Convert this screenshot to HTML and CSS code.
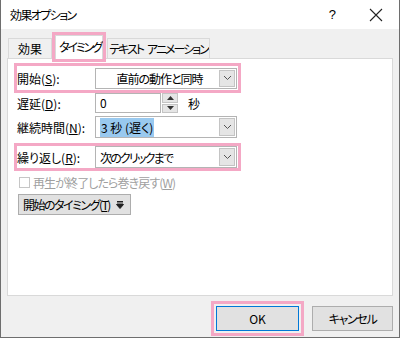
FILE: index.html
```html
<!DOCTYPE html>
<html lang="ja">
<head>
    <meta charset="UTF-8">
    <title>効果オプション</title>
    <link rel="stylesheet" href="styles.css">
</head>
<body>

<div class="window">
    <div class="titlebar">
        <span class="title">効果オプション</span>
        <span class="help">?</span>
        <svg class="close" width="14" height="14" viewBox="0 0 14 14">
            <path d="M1 1 L13 13 M13 1 L1 13" stroke="#222" stroke-width="1.1"/>
        </svg>
    </div>

    <div class="content">
        <div class="tabs">
            <div class="tab tab-effect">効果</div>
            <div class="tab tab-timing active marked">タイミング</div>
            <div class="tab tab-text">テキスト<span class="gap"></span>アニメーション</div>
        </div>

        <div class="panel">
            <div class="row row-start marked">
                <label class="label">開始(<u>S</u>):</label>
                <div class="select center">
                    <span class="value">直前の動作と同時</span>
                    <span class="drop"><svg width="9" height="6" viewBox="0 0 9 6"><path d="M1 1 L4.5 4.5 L8 1" fill="none" stroke="#555" stroke-width="1"/></svg></span>
                </div>
            </div>

            <div class="row row-delay">
                <label class="label">遅延(<u>D</u>):</label>
                <div class="input">0</div>
                <div class="spin">
                    <span class="spin-btn"><svg width="7" height="4" viewBox="0 0 7 4"><path d="M0 4 L3.5 0 L7 4 Z" fill="#333"/></svg></span>
                    <span class="spin-btn"><svg width="7" height="4" viewBox="0 0 7 4"><path d="M0 0 L3.5 4 L7 0 Z" fill="#333"/></svg></span>
                </div>
                <span class="unit">秒</span>
            </div>

            <div class="row row-length">
                <label class="label">継続時間(<u>N</u>):</label>
                <div class="select">
                    <span class="value"><span class="selected">3 秒 (遅く)</span></span>
                    <span class="drop"><svg width="9" height="6" viewBox="0 0 9 6"><path d="M1 1 L4.5 4.5 L8 1" fill="none" stroke="#555" stroke-width="1"/></svg></span>
                </div>
            </div>

            <div class="row row-repeat marked">
                <label class="label">繰り返し(<u>R</u>):</label>
                <div class="select">
                    <span class="value kana">次のクリックまで</span>
                    <span class="drop"><svg width="9" height="6" viewBox="0 0 9 6"><path d="M1 1 L4.5 4.5 L8 1" fill="none" stroke="#555" stroke-width="1"/></svg></span>
                </div>
            </div>

            <div class="check-row">
                <span class="checkbox"></span>
                <span class="check-text">再生が終了したら巻き戻す(<u>W</u>)</span>
            </div>

            <button class="trigger">
                <span class="trigger-text">開始のタイミング(<u>T</u>)</span>
                <svg width="8" height="8" viewBox="0 0 8 8"><path d="M1 0.5 H7 M1 2 H7 M0.5 3.5 L4 7.5 L7.5 3.5 Z" stroke="#222" stroke-width="1" fill="#222"/></svg>
            </button>
        </div>

        <div class="footer">
            <button class="btn ok marked">OK</button>
            <button class="btn kana">キャンセル</button>
        </div>
    </div>
</div>

</body>
</html>
```

FILE: styles.css
```css
* {
    box-sizing: border-box;
}
body {
    margin: 0;
    padding: 0;
    font-family: "Noto Sans CJK JP", "Noto Sans", sans-serif;
    font-size: 12px;
    font-feature-settings: "palt";
    color: #000;
    background: #fff;
}
u {
    text-decoration: underline;
    text-underline-offset: 1px;
}
.window {
    width: 400px;
    height: 338px;
    display: flex;
    flex-direction: column;
    border: 1px solid #6e6e6e;
    border-top: none;
    background: #f0f0f0;
}
.titlebar {
    height: 29px;
    background: #fff;
    display: flex;
    align-items: center;
    padding-left: 9px;
    flex-shrink: 0;
}
.title {
    font-size: 12px;
    letter-spacing: -1.6px;
    flex: 1;
}
.help {
    font-family: "Liberation Sans", sans-serif;
    font-size: 13px;
    margin-right: 33px;
}
.close {
    margin-right: 16px;
}
.content {
    flex: 1;
    padding: 0 6px;
    display: flex;
    flex-direction: column;
}
.tabs {
    display: flex;
    align-items: flex-end;
    height: 29px;
    padding-left: 1px;
}
.tab {
    height: 20px;
    line-height: 19px;
    border: 1px solid #d9d9d9;
    border-bottom: none;
    background: #f0f0f0;
    text-align: center;
    white-space: nowrap;
}
.tab-effect {
    width: 44px;
}
.tab-timing {
    width: 48px;
    letter-spacing: -2.1px;
    padding-left: 2px;
}
.tab-text {
    width: 103px;
    margin-left: 4px;
    letter-spacing: -2px;
    overflow: hidden;
}
.tab-text .gap {
    display: inline-block;
    width: 4px;
}
.tab.active {
    height: 24px;
    line-height: 22px;
    background: #fff;
    margin: 0 0 -1px 3px;
    position: relative;
    z-index: 1;
}
.marked {
    outline: 3px solid #f4a8c5;
}
.panel {
    height: 238px;
    background: #fff;
    border: 1px solid #d9d9d9;
    padding: 6px 0 0 9px;
    display: flex;
    flex-direction: column;
    align-items: flex-start;
}
.row {
    display: flex;
    align-items: center;
    width: 221px;
}
.label {
    width: 78px;
    flex-shrink: 0;
}
.row-start {
    height: 24px;
    margin-top: 1px;
}
.row-delay {
    height: 20px;
    margin-top: 3px;
}
.row-length {
    height: 22px;
    margin-top: 3px;
}
.row-repeat {
    height: 22px;
    margin-top: 8px;
}
.select {
    width: 142px;
    height: 21px;
    border: 1px solid #b4b4b4;
    display: flex;
    align-items: center;
    padding: 1px;
    background: #fff;
}
.row-length .select,
.row-repeat .select {
    height: 22px;
}
.select .value {
    flex: 1;
    padding-left: 3px;
    white-space: nowrap;
    letter-spacing: -1px;
}
.select .value.kana {
    letter-spacing: -1.8px;
}
.select.center .value {
    text-align: center;
}
.selected {
    background: #99c9ef;
    padding: 1px 1px;
    letter-spacing: 0;
}
.drop {
    width: 16px;
    height: 100%;
    background: #e5e5e5;
    border: 1px solid #c4c4c4;
    display: flex;
    align-items: center;
    justify-content: center;
}
.input {
    width: 66px;
    height: 20px;
    border: 1px solid #b4b4b4;
    padding-left: 4px;
    line-height: 18px;
}
.spin {
    width: 16px;
    height: 20px;
    margin-left: 1px;
    display: flex;
    flex-direction: column;
    gap: 1px;
}
.spin-btn {
    flex: 1;
    background: #e5e5e5;
    border: 1px solid #c4c4c4;
    display: flex;
    align-items: center;
    justify-content: center;
}
.unit {
    margin-left: 10px;
}
.check-row {
    display: flex;
    align-items: center;
    height: 14px;
    margin-top: 7px;
    padding-left: 2px;
    color: #a0a0a0;
    letter-spacing: -0.9px;
}
.checkbox {
    width: 11px;
    height: 11px;
    border: 1px solid #c6c6c6;
    background: #fff;
    margin-right: 3px;
}
.trigger {
    margin-top: 5px;
    margin-left: 1px;
    height: 21px;
    padding: 0 6px 0 4px;
    background: #e1e1e1;
    border: 1px solid #adadad;
    font-family: inherit;
    font-size: 12px;
    font-feature-settings: "palt";
    display: flex;
    align-items: center;
    gap: 6px;
}
.trigger-text {
    letter-spacing: -1.5px;
}
.footer {
    display: flex;
    justify-content: flex-end;
    gap: 13px;
    padding-top: 10px;
}
.btn {
    width: 81px;
    height: 25px;
    background: #e1e1e1;
    border: 1px solid #adadad;
    font-family: inherit;
    font-size: 12px;
    font-feature-settings: "palt";
}
.btn.kana {
    letter-spacing: -1.3px;
}
.btn.ok {
    width: 83px;
    border-color: #0078d7;
    outline-offset: 2px;
}
```
